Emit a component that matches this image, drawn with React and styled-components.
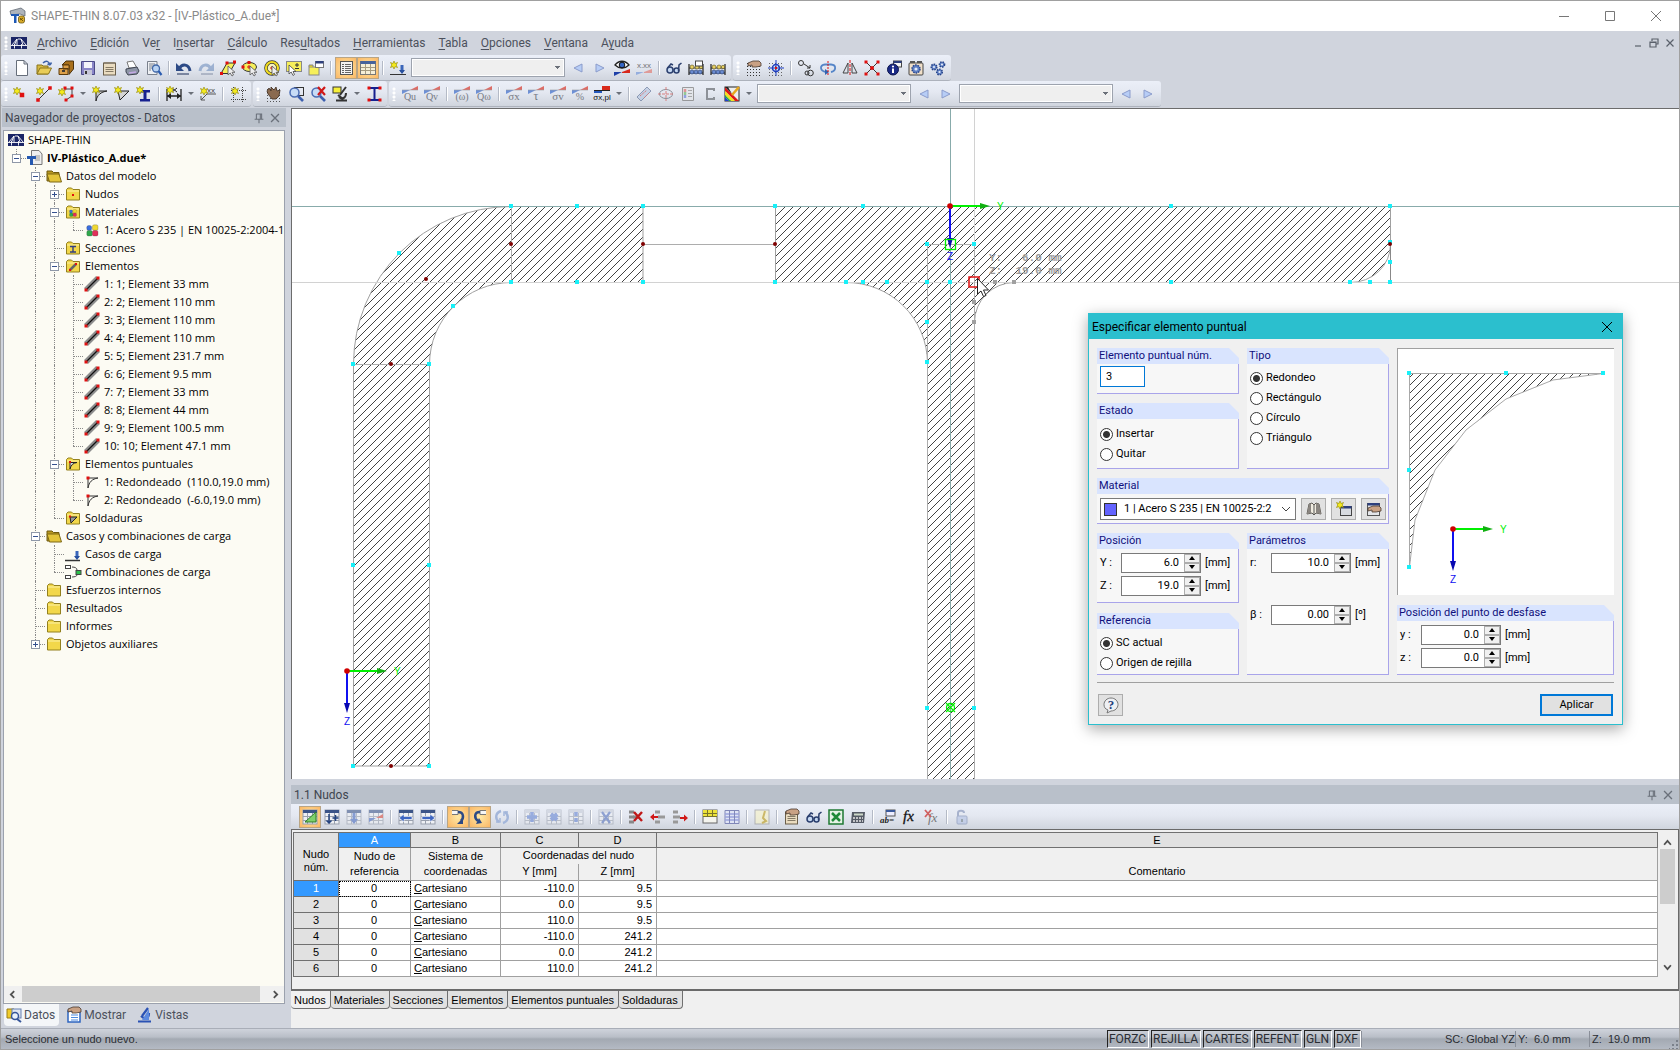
import React, { useState } from "react"
import styled, { createGlobalStyle, css } from "styled-components"

/* ---------- small drawing parts shared by the icons ---------- */

const Star = ({ x = 4, y = 4 }) => (
  <g transform={`translate(${x} ${y})`}>
    <path d="M0-4 1-1.5 3.5-2.5 2.2 0 3.5 2.5 1 1.6 0 4-1 1.6-3.5 2.5-2.2 0-3.5-2.5-1-1.5Z" fill="#f4ea1c" stroke="#8f8500" strokeWidth=".6" />
  </g>
)
const Dot = ({ x, y, s = 3, c = "#e01010" }) => (
  <rect x={x - s / 2} y={y - s / 2} width={s} height={s} fill={c} />
)
const Wedge = ({ faded }) => (
  <g opacity={faded ? 0.65 : 1}>
    <path d="M8 4 16 0V4Z" fill="#d82a1c" />
    <path d="M0 4H8L0 8Z" fill="#2f62c8" />
    <path d="M0 4H16" stroke="#777" strokeWidth=".6" />
  </g>
)
const Sub = ({ children, x = 8, s = 10 }) => (
  <text x={x} y="14" textAnchor="middle" fontFamily="Liberation Serif, serif" fontSize={s} fill="#777b84">{children}</text>
)
const Grid = ({ c = "#99a0ad", head = "#3b5488" }) => (
  <g>
    <rect x="1" y="1" width="14" height="14" fill="#eef0f4" stroke={c} />
    <rect x="1" y="1" width="14" height="3" fill={head} />
    <path d="M1 7.500H15M1 11.500H15M5.500 4V15M10.500 4V15" stroke={c} />
  </g>
)
const Folder = ({ children }) => (
  <g>
    <path d="M1.500 14V3.500L3 2H6.500L8 3.500H14.500V14Z" fill="#f2d74a" stroke="#93801e" />
    <path d="M2 5H14" stroke="#fcf2a8" />
    {children}
  </g>
)
const Dots = ({ c = "#333" }) => (
  <path d="M1 3.500H16M1 6.500H16M1 9.500H16M1 12.500H16M1 15.500H16" stroke={c} strokeDasharray="1 2" />
)
const Cursor = () => <path d="M8 6V15L10.200 13 12 16 13.500 15 12 12.300H15Z" fill="#eee" stroke="#555" strokeWidth=".8" />
const Lens = () => (
  <g>
    <circle cx="6.500" cy="6.500" r="4.500" fill="#c7dcf7" stroke="#4a6cb3" strokeWidth="1.500" />
    <path d="M10 10 15 15" stroke="#3c5fae" strokeWidth="2.600" />
  </g>
)
const Abacus = () => (
  <g>
    <path d="M1 15V4M15 15V4M1 8H15M1 13H15" stroke="#222" strokeWidth="1.200" fill="none" />
    <g fill="#e6cf62" stroke="#5b511c" strokeWidth=".6"><circle cx="4" cy="7" r="2" /><circle cx="9" cy="7" r="2" /><circle cx="13" cy="7" r="1.700" /></g>
    <g fill="#6a8bd0" stroke="#233a70" strokeWidth=".6"><circle cx="4" cy="12" r="2" /><circle cx="8" cy="12" r="2" /><circle cx="12" cy="12" r="2" /></g>
  </g>
)
const Gear = ({ x, y, r = 3 }) => (
  <g>
    <circle cx={x} cy={y} r={r} fill="#5e7fc4" stroke="#29468a" strokeWidth="1.500" strokeDasharray="1.500 1" />
    <circle cx={x} cy={y} r={r / 2.5} fill="#e4ebf8" />
  </g>
)
const Hand = ({ y = 0 }) => (
  <path d={`M2 ${y + 3} 7 ${y + 1}H13L15 ${y + 3}V${y + 6}L10 ${y + 7} 6 ${y + 7}V${y + 5}L2 ${y + 6}Z`} fill="#c9a184" stroke="#4a3a30" strokeWidth=".8" />
)
const Doc = () => (
  <g>
    <rect x="1.500" y="3" width="12" height="12" fill="#eadcc0" stroke="#6b5f4a" />
    <path d="M3.500 7.500H11.500M3.500 9.500H11.500M3.500 11.500H11.500" stroke="#857a66" />
    <path d="M2 2H13V4H2Z" fill="#8e8474" />
  </g>
)
const Fillet = () => <path d="M4 15V5H15C9 6 5 9 4 15Z" fill="#c9c9c9" stroke="#222" />
const Bead = () => (
  <g stroke="#333" strokeWidth=".3">
    <rect x="1" y="2" width="6" height="6" rx="2" fill="#3a6fe0" />
    <rect x="8" y="1" width="7" height="7" rx="2" fill="#f0d830" />
    <rect x="1" y="8" width="7" height="7" rx="2" fill="#2ea84a" />
    <rect x="8" y="8" width="7" height="7" rx="2" fill="#e0305a" />
  </g>
)
const IBeam = ({ c = "#16208f" }) => <path d="M4 4H14V6.500H10.500V13H14V15.500H4V13H7.500V6.500H4Z" fill={c} />

const icons = {
  logo: (
    <g>
      <rect y="2" width="16" height="12" fill="#1b2566" />
      <path d="M0 10.500H16M3.500 13.500V9M10.500 13.500V9M6 4 1 10M6 4V10M7 4H10M10 4 15 10M10 4 12 10M6 4 3.500 10" stroke="#fff" fill="none" strokeWidth=".9" />
    </g>
  ),
  app: (
    <g>
      <path d="M0 3 11 0 15 3V8L10 6 1 7Z" fill="#aeb4bc" stroke="#555d68" strokeWidth=".7" />
      <path d="M1 6H9V8H6.500V15H4V8H1Z" fill="#1e58b4" />
      <rect x="8.500" y="8" width="6" height="7" rx="2" fill="#d9ac2b" stroke="#6b5511" strokeWidth=".8" />
      <path d="M10 10 13 13M13 10 10 12" stroke="#5a4300" strokeWidth=".8" />
    </g>
  ),
  new: <path d="M2.500.500H10L13.500 4V15.500H2.500ZM10 .500V4H13.500" fill="#fff" stroke="#666e7a" />,
  open: (
    <g>
      <path d="M1 14V5H6L7 6H12V14Z" fill="#d5b843" stroke="#8a741b" />
      <path d="M1 14 4 8H15.500L12.500 14Z" fill="#e9cd58" stroke="#8a741b" />
      <path d="M7 3C10 0 13 1 14 5M14 5 11.500 4M14 5 15.500 2.500" stroke="#3e62a8" strokeWidth="1.500" fill="none" />
    </g>
  ),
  drawer: (
    <g>
      <path d="M4 5 8 1H15.500V9L11 14.500V5Z" fill="#a8701c" stroke="#4c320c" />
      <path d="M5 5H11V9H5ZM1 8.500H10V14.500H1Z" fill="#dca04a" stroke="#5c3c0e" />
      <path d="M4 11H7" stroke="#333" strokeWidth="1.800" />
    </g>
  ),
  save: (
    <g>
      <path d="M1.500 1.500H14.500V14.500H1.500Z" fill="#8a86c8" stroke="#4b4a86" />
      <rect x="4" y="2" width="8" height="6" fill="#f3f3fa" />
      <rect x="4" y="10" width="8" height="5" fill="#c6c6d8" />
      <rect x="5" y="11" width="2" height="3" fill="#333" />
    </g>
  ),
  sheet: <Doc />,
  print: (
    <g>
      <path d="M3 2 9 1 13 8H5Z" fill="#fff" stroke="#777" />
      <path d="M2 9 13 7 15 11 13 14 4 15 2 12Z" fill="#8d95a6" stroke="#3d4350" />
      <path d="M5 13 12 12" stroke="#c3a8e4" strokeWidth="1.500" />
    </g>
  ),
  preview: (
    <g>
      <path d="M1.500 1.500H11V14.500H1.500ZM3 4H9M3 6H9M3 8H6M3 10H5" fill="#eef0f3" stroke="#7a818d" />
      <circle cx="10" cy="8.500" r="3.500" fill="#b8d3f4" stroke="#3f67a8" strokeWidth="1.300" />
      <path d="M12.500 11 15.500 15" stroke="#2b5cb0" strokeWidth="2.200" />
    </g>
  ),
  undo: (
    <g>
      <path d="M3 9C6 3 13 4 14 11" fill="none" stroke="#2c4a86" strokeWidth="3" />
      <path d="M0 3V11H8Z" fill="#2c4a86" />
      <path d="M1 14H13" stroke="#1c2f58" />
    </g>
  ),
  redo: (
    <g opacity=".45">
      <path d="M13 9C10 3 3 4 2 11" fill="none" stroke="#4a72ad" strokeWidth="3" />
      <path d="M16 3V11H8Z" fill="#4a72ad" />
      <path d="M3 14H15" stroke="#1c2f58" />
    </g>
  ),
  selPoly: (
    <g>
      <path d="M7 3H15L9 13.500H1Z" fill="#f6ef5a" stroke="#333" />
      <Dot x={7} y={3} /><Dot x={14.500} y={2} /><Dot x={1.500} y={13.500} /><Cursor />
    </g>
  ),
  selEllipse: (
    <g>
      <ellipse cx="7.500" cy="7" rx="7" ry="4.500" fill="#f6ef5a" stroke="#333" />
      <Dot x={7} y={2.500} /><Dot x={1} y={7} /><path d="M5 7H9M7 5V9" stroke="#e01010" /><Cursor />
    </g>
  ),
  selRing: (
    <g>
      <circle cx="8" cy="8" r="6" fill="#f7f3c0" stroke="#333" strokeWidth="3.500" />
      <circle cx="8" cy="8" r="6" fill="none" stroke="#f0dc20" strokeWidth="2.200" />
      <path d="M6 8H10M8 6V10" stroke="#e01010" /><Cursor />
    </g>
  ),
  selRect: (
    <g>
      <rect x=".500" y="1.500" width="15" height="10" fill="#f6ef5a" stroke="#888" />
      <path d="M9 5H13M11 3V7M9 8.500H13" stroke="#333" />
      <path d="M3 5V14L5.200 12 7 15.500 8.500 14.500 7 11.500H10Z" fill="#fff" stroke="#444" strokeWidth=".8" />
    </g>
  ),
  windows: (
    <g>
      <rect x="1" y="7" width="10" height="8" fill="#f6ef5a" stroke="#888" />
      <path d="M1 7V5H5V7" fill="#d8c92a" stroke="#888" />
      <rect x="7.500" y="1.500" width="8" height="6" fill="#fff" stroke="#777" />
      <rect x="7.500" y="1" width="8" height="2.500" fill="#2d3f7d" />
    </g>
  ),
  list: (
    <g>
      <rect x="2.500" y="1.500" width="12" height="13" fill="#f4f4f4" stroke="#555" />
      <path d="M7 4.500H13M7 6.500H13M7 8.500H13M7 10.500H13M7 12.500H13" stroke="#666" />
      <path d="M5 4V13" stroke="#333" strokeDasharray="1 1" strokeWidth="1.500" />
    </g>
  ),
  table: (
    <g>
      <rect x=".500" y="1.500" width="15" height="13" fill="#f6efd8" stroke="#777" />
      <rect x=".500" y="1" width="15" height="3" fill="#47639c" />
      <path d="M1 7.500H15M1 10.500H15M5.500 4V14M10.500 4V14" stroke="#a69b80" />
    </g>
  ),
  load: (
    <g>
      <Star x={4} y={5} />
      <path d="M0 14.500H16" stroke="#333" />
      <path d="M12 5V12" stroke="#3a66ba" strokeWidth="3" /><path d="M9 10H15L12 14Z" fill="#274f9e" />
    </g>
  ),
  left: <path d="M12 4V12L4 8Z" fill="#b7cdf6" stroke="#8b9ccb" />,
  right: <path d="M4 4V12L12 8Z" fill="#b7cdf6" stroke="#8b9ccb" />,
  eye: (
    <g>
      <path d="M1 5C5 0 11 0 15 5 11 9 5 9 1 5Z" fill="#fff" stroke="#222" strokeWidth="1.300" />
      <circle cx="8" cy="5" r="2.800" fill="#3565c4" stroke="#111" />
      <path d="M8 12 16 9V13H8Z" fill="#d8281c" /><path d="M0 12H8L0 16Z" fill="#1e40a8" />
    </g>
  ),
  xxx: (
    <g opacity=".8">
      <text x="8" y="8" textAnchor="middle" fontFamily="Liberation Sans, sans-serif" fontSize="8" fill="#555">x.xx</text>
      <path d="M8 12 16 9V13H8Z" fill="#e08a84" /><path d="M0 12H8L0 15Z" fill="#84a2dc" />
    </g>
  ),
  glasses: (
    <g fill="#c5d8f2" stroke="#2b3f6e" strokeWidth="1.500">
      <circle cx="4" cy="10" r="3" /><circle cx="10.500" cy="10.500" r="2.500" /><path d="M1.500 8 5 4 7 5M12.500 11 13 5 15.500 3" fill="none" />
    </g>
  ),
  abacusWin: <g><Abacus /><rect x="7.500" y="1" width="7" height="5" fill="#fff" stroke="#444" /></g>,
  abacus: <Abacus />,
  handGrid: <g><Dots /><Hand /></g>,
  targetGrid: (
    <g>
      <Dots c="#666" /><circle cx="8" cy="8" r="3.500" fill="none" stroke="#1e3fc0" strokeWidth="1.500" />
      <path d="M8 0V16M0 8H16" stroke="#1e3fc0" /><Dot x={8} y={8} s={2} />
    </g>
  ),
  copy: (
    <g fill="none" stroke="#333">
      <circle cx="3" cy="3" r="2.500" /><circle cx="12.500" cy="13" r="2.800" /><circle cx="9" cy="13" r="2" /><path d="M6 4 12 8M12 8V5M12 8H9" />
    </g>
  ),
  rotate: (
    <g>
      <path d="M6 12C0 11-1 5 5 4.500H11C17 5 16 11 11 12" fill="none" stroke="#5585c8" strokeWidth="1.800" />
      <path d="M5 9V15L9 12Z" fill="#3264b0" /><path d="M8 1V15" stroke="#e01010" strokeDasharray="2 1" />
    </g>
  ),
  mirror: (
    <g fill="none" stroke="#444"><path d="M6 3V13H1ZM10 3V13H15Z" /><path d="M8 0V16" stroke="#e01010" strokeDasharray="3 1" /></g>
  ),
  scale: (
    <g>
      <path d="M2 2 14 14M14 2 2 14" stroke="#333" />
      <Dot x={2} y={2} /><Dot x={14} y={2} /><Dot x={2} y={14} /><Dot x={14} y={14} /><circle cx="8" cy="8" r="2" fill="#e01010" />
    </g>
  ),
  info: (
    <g>
      <rect x="7.500" y="1" width="8" height="6" fill="#f5f5f5" stroke="#444" /><rect x="7.500" y="1" width="8" height="2" fill="#2d3f7d" />
      <circle cx="7" cy="9.500" r="5.500" fill="#1b2a86" stroke="#0e174e" /><path d="M7 8.500V13" stroke="#fff" strokeWidth="2" /><circle cx="7" cy="6.500" r="1.100" fill="#fff" />
    </g>
  ),
  gearDoc: <g><rect x="1" y="3" width="14" height="12" rx="1" fill="#f0dfc8" stroke="#444" /><path d="M2 2H7M9 2H14" stroke="#555" strokeWidth="2" /><Gear x={8} y={9} r={4} /></g>,
  gears: <g><Gear x={4} y={7} r={2.800} /><Gear x={12} y={4.500} r={2.600} /><Gear x={9.500} y={12} r={2.800} /></g>,

  point: <g><Star x={3} y={5} /><Dot x={8} y={9} s={4.500} /></g>,
  line: <g><Star x={4} y={5} /><path d="M2 14 14 2" stroke="#333" /><Dot x={2} y={14} s={3.500} /><Dot x={14} y={2} s={3.500} /></g>,
  poly: <g><path d="M6 3H14V10L8 14" fill="none" stroke="#444" /><Star x={4} y={6} /><Dot x={14} y={2} /><Dot x={14} y={10} /><Dot x={8} y={14} /><Dot x={7} y={2} /></g>,
  fillet: <g><Fillet /><Star x={4} y={4} /></g>,
  gusset: <g><path d="M4 5H15L6 14Z" fill="#d4d4d4" stroke="#222" /><Star x={4} y={4} /></g>,
  ibeam: <g><IBeam /><Star x={4} y={4} /></g>,
  dim: <g><path d="M1 3V15M15 3V15M1 10H15" stroke="#222" strokeWidth="1.300" /><path d="M1 10 5 7V13ZM15 10 11 7V13Z" fill="#222" /><path d="M6 2 11 6M11 2 6 6" stroke="#222" /><Star x={4} y={4} /></g>,
  dimxx: <g><text x="7" y="7" fontFamily="Liberation Sans, sans-serif" fontSize="8" fill="#444">xx</text><path d="M16 8H7L1 14M1 14V10M1 14H5" stroke="#555" fill="none" /><Star x={4} y={5} /></g>,
  gridNew: <g><path d="M3.500 1V16M12.500 1V16M1 4.500H16M1 13.500H16" stroke="#444" strokeDasharray="1 1" /><Star x={5} y={5} /></g>,
  pan: <g><Dots c="#555" /><path d="M1 5 3 2 5 5 5 1 8 4 10 1 11 5 14 4 13 10 10 13H6L2 8Z" fill="#8a6a50" stroke="#3c2c20" strokeWidth=".8" /></g>,
  zoomWin: <g><rect x="6.500" y="1.500" width="9" height="8" fill="none" stroke="#333" /><Lens /></g>,
  zoomOff: <g><Lens /><path d="M8 1 15 9M15 1 8 9" stroke="#d01818" strokeWidth="2.200" /></g>,
  microscope: (
    <g><path d="M14 1 8 9M4 14.500H15M7 11C10 14 14 12 14 7M6 9 11 13" stroke="#333" strokeWidth="2" fill="none" /><rect x="1" y="1" width="8" height="6" fill="#f6ef3a" stroke="#333" /></g>
  ),
  section: <g><path d="M3 2H14M3 14H14M8.500 2V14" stroke="#16208f" strokeWidth="2" /><Dot x={3} y={2} /><Dot x={14} y={2} /><Dot x={3} y={14} /><Dot x={14} y={14} /></g>,
  qu: <g><Wedge faded /><Sub>Qu</Sub></g>,
  qv: <g><Wedge faded /><Sub>Qv</Sub></g>,
  w: <g><Wedge faded /><Sub>(ω)</Sub></g>,
  qw: <g><Wedge faded /><Sub>Qω</Sub></g>,
  sx: <g><Wedge faded /><Sub s={11}>σx</Sub></g>,
  tau: <g><Wedge faded /><Sub s={12}>τ</Sub></g>,
  sv: <g><Wedge faded /><Sub s={11}>σv</Sub></g>,
  pct: <g><Wedge faded /><Sub>%</Sub></g>,
  sxpl: (
    <g><path d="M0 4H8V7H0Z" fill="#2458bc" /><path d="M8 0H16V4H8Z" fill="#d82a1c" /><path d="M0 4.500H16" stroke="#222" />
      <text x="8" y="14" textAnchor="middle" fontFamily="Liberation Sans, sans-serif" fontSize="8" fill="#111">σx,pl</text></g>
  ),
  ruler: <g opacity=".7"><path d="M1 11 11 1 15 5 5 15Z" fill="#b9c9e2" stroke="#687a9c" /><path d="M4 10 11 4M8 12 13 7" stroke="#d05050" strokeDasharray="2 1" /></g>,
  ellipse: <g fill="none" stroke="#8a8f98"><ellipse cx="8" cy="8" rx="6.500" ry="4.500" /><path d="M8 1V15M0 8H16" stroke="#d88080" strokeDasharray="3 1" /></g>,
  legend: <g opacity=".8"><path d="M2.500 1.500H13.500V14.500H2.500Z" fill="#e4e6ea" stroke="#888" /><path d="M5 3V6" stroke="#e08080" strokeWidth="2.500" /><path d="M5 6V9" stroke="#80c080" strokeWidth="2.500" /><path d="M5 9V12" stroke="#8090e0" strokeWidth="2.500" /><path d="M8 4.500H12M8 7.500H12M8 10.500H12" stroke="#999" /></g>,
  channel: <path d="M12 5V3H5V13H12V11" fill="none" stroke="#8d9198" strokeWidth="2" />,
  colors: (
    <g><rect x="1" y="1" width="14" height="14" fill="#eee" stroke="#222" /><path d="M1 1 15 15H11L1 5Z" fill="#e01818" /><path d="M1 5 11 15H7L1 9Z" fill="#f4e020" /><path d="M1 9 7 15H5L1 11Z" fill="#22b43a" /><path d="M1 11 5 15H1Z" fill="#2040d0" /><path d="M1 1H4L8 8Z" fill="#222" /><path d="M15 1 8 9" stroke="#e6a71e" strokeWidth="2.500" /></g>
  ),

  tblEdit: <g><Grid /><path d="M3 13 14 3V13Z" fill="#7ed06c" stroke="#2f7d24" /></g>,
  tblSplit: <g><Grid /><path d="M5 5V14M2.500 11.500 5 14 7.500 11.500M11.500 6V12M8.500 9H14.500" stroke="#22417f" strokeWidth="1.500" fill="none" /></g>,
  tblDown: <g opacity=".6"><Grid /><path d="M8 4V12" stroke="#4a6cc0" strokeWidth="3" /><path d="M4 10H12L8 15Z" fill="#4a6cc0" /></g>,
  tblWedge: <g opacity=".6"><Grid /><path d="M8 9 15 5V9Z" fill="#d84a3c" /><path d="M1 9H8L1 13Z" fill="#4a6cc0" /></g>,
  tblLeft: <g><Grid /><path d="M1 9 6 5V7.500H14V10.500H6V13Z" fill="#3e66c2" stroke="#fff" strokeWidth=".6" /></g>,
  tblRight: <g><Grid /><path d="M15 9 10 5V7.500H2V10.500H10V13Z" fill="#3e66c2" stroke="#fff" strokeWidth=".6" /></g>,
  turnDown: <g><path d="M2 1.500H8V5.500H2" fill="#f6f6f6" stroke="#777" /><path d="M8 3C14 3 14 9 11 12" fill="none" stroke="#2c4a86" strokeWidth="2.500" /><path d="M13 9V15H7Z" fill="#2c4a86" /></g>,
  turnUp: <g><path d="M14 1.500H8V5.500H14" fill="#f6f6f6" stroke="#777" /><path d="M8 3C2 3 2 9 6 12" fill="none" stroke="#2c4a86" strokeWidth="2.500" /><path d="M4 15 10 14 7 9Z" fill="#2c4a86" /></g>,
  sync: <g fill="none" stroke="#a3b6da" strokeWidth="2.400"><path d="M7 2C1 4 1 10 5 13M9 14C15 12 15 6 11 3" /><path d="M2 13H6V9M14 3H10V7" strokeWidth="1.500" /></g>,
  plus: <g opacity=".55"><Grid head="#c4cad6" /><path d="M8 3V13M3 8H13" stroke="#5a7cd0" strokeWidth="3.500" /></g>,
  times: <g opacity=".55"><Grid head="#c4cad6" /><path d="M5 5 11 11M11 5 5 11" stroke="#5a7cd0" strokeWidth="4" /></g>,
  colon: <g opacity=".55"><Grid head="#c4cad6" /><path d="M8 3V7M8 9V13" stroke="#5a7cd0" strokeWidth="3.500" /></g>,
  clearX: <g opacity=".55"><Grid head="#c4cad6" /><path d="M4 3 12 14M12 3 4 14" stroke="#4a68b8" strokeWidth="2.200" /></g>,
  rowDel: <g><path d="M1 3H6M1 8H6M1 13H6" stroke="#888" strokeWidth="3" /><path d="M5 8H11" stroke="#888" strokeWidth="3" /><path d="M6 3 14 12M14 3 6 12" stroke="#c01818" strokeWidth="2.400" /></g>,
  rowIn: <g><path d="M5 3H10M8 8H15M5 13H10" stroke="#999" strokeWidth="3" /><path d="M0 8 4 4.500V7H8V9H4V11.500Z" fill="#d01818" /></g>,
  rowOut: <g><path d="M1 3H6M1 8H8M1 13H6" stroke="#999" strokeWidth="3" /><path d="M16 9 12 5.500V8H8V10H12V12.500Z" fill="#d01818" /></g>,
  gridYellow: <g><rect x="1" y="1" width="14" height="13" fill="#f4f4ee" stroke="#666" /><rect x="1" y="1" width="14" height="6" fill="#ece23a" /><path d="M1 4.500H15M1 7.500H15M5.500 1V8M10.500 1V8" stroke="#77742a" /></g>,
  gridBlue: <g><path d="M1 1.500H15V14.500H1Z" fill="#dfe4f4" stroke="#8087b8" /><path d="M1 5H15M1 8H15M1 11H15" stroke="#9aa2dc" strokeWidth="1.600" /><path d="M5.500 2V14M10.500 2V14" stroke="#8087b8" /></g>,
  chart: <g opacity=".65"><rect x="1" y="1" width="14" height="14" fill="#f6f2c8" stroke="#999" /><path d="M11 2 9 9 12 12 8 14" stroke="#c0a020" strokeWidth="2" fill="none" /></g>,
  handDoc: <g><Doc /><Hand y={-1} /></g>,
  excel: <g><path d="M1 1H15V15H1Z" fill="#e6f2e6" stroke="#1f7a33" strokeWidth="1.500" /><path d="M4 4 12 12M12 4 4 12" stroke="#1f8a38" strokeWidth="2.500" /></g>,
  calc: <g><path d="M2 3H15L14 14H1Z" fill="#555b66" /><path d="M4 4.500H13V6.500H4Z" fill="#cdd8c8" /><path d="M3 9H13M3 12H13" stroke="#e6e6e6" strokeWidth="1.500" strokeDasharray="2 1" /></g>,
  ab: <g><rect x="6" y="1" width="9" height="6" fill="#eef" stroke="#555" /><rect x="6" y="1" width="9" height="2" fill="#3b5a9c" /><text x="0" y="14" fontFamily="Liberation Serif, serif" fontSize="9" fontStyle="italic" fontWeight="bold" fill="#222">ab=</text></g>,
  fx: <text x="1" y="12" fontFamily="Liberation Serif, serif" fontSize="15" fontStyle="italic" fill="#111" stroke="#111" strokeWidth=".3">fx</text>,
  fxOff: <g><text x="4" y="13" fontFamily="Liberation Serif, serif" fontSize="13" fontStyle="italic" fill="#777">fx</text><path d="M1 1 7 8M7 1 1 8" stroke="#d06060" strokeWidth="1.800" /></g>,
  lock: <g opacity=".6"><path d="M4 8V4C4 1 10 1 10 4" fill="none" stroke="#7d8db4" strokeWidth="2" /><rect x="3" y="7" width="10" height="8" rx="1" fill="#b4c3e6" stroke="#7d8db4" /><path d="M8 10V13" stroke="#566" strokeWidth="1.500" /></g>,

  doc: <g><path d="M4.500.500H12L15 4V14.500H4.500Z" fill="#eee" stroke="#777" /><path d="M8 6H13M8 8H13M8 10H13" stroke="#999" /><path d="M0 6H9V9H6V15H3V9H0Z" fill="#2458b0" /></g>,
  folderOpen: <g><path d="M1 13V3H6L7.500 4.500H13V13Z" fill="#b9971f" stroke="#6f5b10" /><path d="M3.500 14 1 6H13L15.500 14Z" fill="#e3c43a" stroke="#7d6814" /></g>,
  folder: <Folder />,
  fNodes: <Folder><Dot x={8} y={9} s={2} /></Folder>,
  fMat: <Folder><g transform="translate(4 5) scale(.5)"><Bead /></g></Folder>,
  fSec: <Folder><path d="M5 6.500H11M5 12H11M8 6.500V12" stroke="#333f80" strokeWidth="1.400" /></Folder>,
  fElem: <Folder><path d="M5 12 11 6" stroke="#666" strokeWidth="2.500" /><Dot x={5} y={12} s={2} /><Dot x={11} y={6} s={2} /></Folder>,
  fPoint: <Folder><path d="M5 13V6.500H12C8 7 6 9 5 13" fill="#ddd" stroke="#222" /><Dot x={5} y={6} s={2} /></Folder>,
  fWeld: <Folder><path d="M5 7H12L6 13Z" fill="#999" stroke="#222" /><Dot x={5} y={6.500} s={2} /></Folder>,
  beads: <g transform="translate(2 2) scale(.8)"><Bead /></g>,
  elem: <g><path d="M2 14 14 2" stroke="#8d8d8d" strokeWidth="5.500" /><path d="M2 14 14 2" stroke="#111" strokeWidth="1.300" /><Dot x={2} y={14} /><Dot x={14} y={2} /></g>,
  round: <g><path d="M4 14V4H14C8 5 5 8 4 14" fill="none" stroke="#333" /><Dot x={4} y={4} /></g>,
  loadCase: <g><path d="M0 14.500H15" stroke="#333" strokeWidth="1.500" /><path d="M12 5V12" stroke="#3a66ba" strokeWidth="3" /><path d="M9 10H15L12 14Z" fill="#274f9e" /></g>,
  combo: <g fill="none" stroke="#444"><rect x=".500" y="1.500" width="5" height="3" fill="#fff" /><rect x=".500" y="11.500" width="5" height="3" fill="#fff" /><path d="M7 3C10 3 12 4 12 6M7 13C10 13 12 12 12 11" /><rect x="11" y="6.500" width="5" height="4" fill="#2cc04a" /></g>,
  navData: <g><path d="M1 2H8V11H1Z" fill="#f0cc2c" stroke="#9a7f14" /><rect x="6" y="2" width="9" height="9" fill="#dfe6f2" stroke="#6680b0" /><circle cx="9" cy="9" r="3.500" fill="#e9f2fc" stroke="#36569a" strokeWidth="1.500" /><path d="M11 12 15 15" stroke="#36569a" strokeWidth="2" /></g>,
  navShow: <g><rect x="2" y="4" width="12" height="11" fill="#fff" stroke="#2c64c0" strokeWidth="1.500" /><path d="M5 8H12M5 10.500H12M5 13H12" stroke="#4c8ae0" /><Hand y={-1} /></g>,
  navView: <g><path d="M11 1 5 9M1 14.500H14M4 9C8 13 12 12 12 6" fill="none" stroke="#2a52b4" strokeWidth="2.200" /><path d="M12 2V13H5Z" fill="#5c8ae0" /></g>,
  book: <g><path d="M1 13 3 3 6 2 8 4 10 2 13 3 15 13 10 12 8 14 6 12Z" fill="#f0ece0" stroke="#5d5a55" /><path d="M8 4V14" stroke="#555" /><path d="M1 13 3 3 5 2.500 5 12ZM10 2 13 3 15 13 10 12Z" fill="#8a8580" /></g>,
  winNew: <g><rect x="4.500" y="5.500" width="11" height="9" fill="#d8dbe0" stroke="#444" /><rect x="4.500" y="5" width="11" height="2.500" fill="#2d3f7d" /><Star x={4} y={4} /></g>,
  winHand: <g><rect x="1.500" y="2.500" width="12" height="12" fill="#e4e6ea" stroke="#555" /><rect x="1.500" y="2" width="12" height="2.500" fill="#2d3f7d" /><Hand y={4} /></g>,
  help: <g><path d="M8 1C12 1 15 4 15 7.500S12 14 8 14L4 16 5 13C2 12 1 10 1 7.500 1 4 4 1 8 1Z" fill="#eef0f4" stroke="#777" /><text x="8" y="12" textAnchor="middle" fontFamily="Liberation Serif, serif" fontWeight="bold" fontSize="13" fill="#24407c">?</text></g>,
  pin: <path d="M5 3V9.500H11V3.500H5M9.500 3.500V9.500M3 9.500H13M8 10V14" fill="none" stroke="#6a707a" strokeWidth="1.200" />,
  close: <path d="M3.500 3.500 12.500 12.500M12.500 3.500 3.500 12.500" stroke="#6a707a" strokeWidth="1.500" />,
}

const Glyph = styled.svg.attrs({ viewBox: "0 0 16 16", "aria-hidden": true })`
  width: ${(p) => p.$size || 16}px;
  height: ${(p) => p.$size || 16}px;
  flex: none;
  display: block;
  overflow: visible;
`
const Icon = ({ name, size }) => <Glyph $size={size}>{icons[name]}</Glyph>

/* ---------- data ---------- */

const menus = [
  ["", "A", "rchivo"], ["", "E", "dición"], ["Ve", "r", ""], ["I", "n", "sertar"], ["", "C", "álculo"],
  ["Res", "u", "ltados"], ["", "H", "erramientas"], ["", "T", "abla"], ["", "O", "pciones"], ["", "V", "entana"], ["A", "y", "uda"],
]

// "|" separator, "v" drop-down arrow, "[]" combo box, "*" prefix for a pressed button
const barFile = "new open drawer save sheet print preview | undo redo selPoly selEllipse selRing selRect windows | *list *table | load [] left right eye xxx | glasses abacusWin abacus"
const barEdit = "handGrid targetGrid | copy rotate mirror scale info gearDoc gears"
const barInsert = "point line poly v fillet gusset ibeam | dim v dimxx | gridNew"
const barZoom = "pan zoomWin zoomOff microscope v section"
const barResults = "qu qv | w qw | sx tau sv pct sxpl v | ruler ellipse legend channel colors v [] left right [] left right"
const barTable = "*tblEdit tblSplit tblDown tblWedge | tblLeft tblRight | *turnDown *turnUp sync | plus times colon | clearX | rowDel rowIn rowOut | gridYellow gridBlue | chart | handDoc glasses excel calc | ab fx fxOff | lock"

// guides: "I" line through, "T" branch, "L" last branch, " " nothing
// toggles: "e" and "-" open, "+" closed, "p" closed and last of its level
const tree = [
  ["", "logo", "SHAPE-THIN"],
  ["e", "doc", "IV-Plástico_A.due*", true],
  [" -", "folderOpen", "Datos del modelo"],
  [" I+", "fNodes", "Nudos"],
  [" I-", "fMat", "Materiales"],
  [" IIL", "beads", "1: Acero S 235 | EN 10025-2:2004-1"],
  [" IT", "fSec", "Secciones"],
  [" I-", "fElem", "Elementos"],
  [" IIT", "elem", "1: 1; Element 33 mm"],
  [" IIT", "elem", "2: 2; Element 110 mm"],
  [" IIT", "elem", "3: 3; Element 110 mm"],
  [" IIT", "elem", "4: 4; Element 110 mm"],
  [" IIT", "elem", "5: 5; Element 231.7 mm"],
  [" IIT", "elem", "6: 6; Element 9.5 mm"],
  [" IIT", "elem", "7: 7; Element 33 mm"],
  [" IIT", "elem", "8: 8; Element 44 mm"],
  [" IIT", "elem", "9: 9; Element 100.5 mm"],
  [" IIL", "elem", "10: 10; Element 47.1 mm"],
  [" I-", "fPoint", "Elementos puntuales"],
  [" IIT", "round", "1: Redondeado  (110.0,19.0 mm)"],
  [" IIL", "round", "2: Redondeado  (-6.0,19.0 mm)"],
  [" IL", "fWeld", "Soldaduras"],
  [" -", "folderOpen", "Casos y combinaciones de carga"],
  [" IT", "loadCase", "Casos de carga"],
  [" IL", "combo", "Combinaciones de carga"],
  [" T", "folder", "Esfuerzos internos"],
  [" T", "folder", "Resultados"],
  [" T", "folder", "Informes"],
  [" p", "folder", "Objetos auxiliares"],
]

const nodes = [
  ["-110.0", "9.5"], ["0.0", "9.5"], ["110.0", "9.5"], ["-110.0", "241.2"], ["0.0", "241.2"], ["110.0", "241.2"],
]

const sheets = ["Nudos", "Materiales", "Secciones", "Elementos", "Elementos puntuales", "Soldaduras"]
const modes = ["FORZC", "REJILLA", "CARTES", "REFENT", "GLN", "DXF"]

const cyanPoints = [
  [511, 206], [577, 206], [643, 206], [775, 206], [863, 206], [1171, 206], [1390, 206], [399, 253], [453, 306],
  [511, 282], [577, 282], [643, 282], [775, 282], [846, 282], [863, 282], [887, 282], [927, 282], [950, 282],
  [1171, 282], [1350, 282], [1370, 282], [1390, 282], [1390, 262], [1390, 242], [927, 244], [974, 244],
  [927, 322], [927, 362], [353, 364], [429, 364], [353, 565], [429, 565], [353, 766], [429, 766], [927, 708], [974, 708],
]
const redPoints = [[511, 244], [643, 244], [775, 244], [1390, 244], [426, 279], [391, 364], [391, 766]]
const greyPoints = [[995, 282], [1014, 282], [974, 302], [974, 322]]

/* ---------- tool bars ---------- */

function Tools({ items }) {
  return items.split(" ").map((item, i) => {
    if (item === "|") return <Separator key={i} />
    if (item === "v") return <DropArrow key={i} aria-label="Más opciones" />
    if (item === "[]") return <Combo key={i} aria-label="Selección" />
    const pressed = item[0] === "*"
    const name = pressed ? item.slice(1) : item
    return (
      <ToolButton key={i} $pressed={pressed} aria-label={name}>
        <Icon name={name} />
      </ToolButton>
    )
  })
}

function ToolStrip({ items }) {
  return (
    <Strip>
      <Grip />
      <Tools items={items} />
    </Strip>
  )
}

/* ---------- tree ---------- */

function TreeRow({ guides, icon, label, bold }) {
  return (
    <Row>
      {guides.split("").map((g, i) => {
        const toggle = "e-+p".includes(g)
        return (
          <Guide key={i} $kind={g}>
            {toggle && <Toggle aria-label="Desplegar">{g === "+" || g === "p" ? <Plus /> : <Minus />}</Toggle>}
          </Guide>
        )
      })}
      <RowIcon>
        <Icon name={icon} />
      </RowIcon>
      <RowLabel $bold={bold}>{label}</RowLabel>
    </Row>
  )
}
const Minus = () => <MiniSvg viewBox="0 0 7 7"><path d="M1 3.500H6" stroke="#35518f" /></MiniSvg>
const Plus = () => <MiniSvg viewBox="0 0 7 7"><path d="M1 3.500H6M3.500 1V6" stroke="#35518f" /></MiniSvg>

/* ---------- drawing area ---------- */

const Axes = ({ x, y, gap = 50 }) => (
  <g>
    <path d={`M${x} ${y}h30`} stroke="#00f000" strokeWidth="2" />
    <path d={`M${x + 30} ${y - 3}l10 3-10 3z`} fill="#10b010" />
    <path d={`M${x} ${y}v32`} stroke="#1010f0" strokeWidth="2" />
    <path d={`M${x - 3} ${y + 32}l3 10 3-10z`} fill="#0808b0" />
    <circle cx={x} cy={y} r="2.800" fill="#d00000" />
    <AxisText x={x + gap - 3} y={y + 4} fill="#00f000">Y</AxisText>
    <AxisText x={x - 3} y={y + 54} fill="#1010f0">Z</AxisText>
  </g>
)

const Hatch = ({ id }) => (
  <pattern id={id} width="8" height="8" patternUnits="userSpaceOnUse">
    <path d="M-1 9 9-1M-1 1 1-1M7 9 9 7" stroke="#2c2c2c" strokeWidth=".9" />
  </pattern>
)

function Drawing() {
  return (
    <DrawingSvg role="img" aria-label="Sección">
      <defs><Hatch id="hatch" /></defs>
      <g transform="translate(-292 -109)">
        <g fill="url(#hatch)" stroke="#a0a0a0">
          <path d="M353.500 766V364A158 158 0 0 1 511 206.500H643V282.500H511A82 82 0 0 0 429.500 364V766Z" />
          <path d="M775.500 206.500H1390.500V244A40 38 0 0 1 1350 282.500H1014A40 40 0 0 0 974.500 322V790H927.500V363A81 81 0 0 0 846 282.500H775.500Z" />
        </g>
        <g stroke="#c4c4c4" fill="none">
          <path d="M291 282.500H1690M974.500 100V790" stroke="#d2d2d2" />
          <path d="M511.500 206V282M353 364.500H429M643 244.500H775M927.500 790V244.500H974.500V790" stroke="#adadad" />
          <path d="M1390.500 244V282" stroke="#888" />
        </g>
        <path d="M291 206.500H1690M950.500 100V790" stroke="#88abab" fill="none" />
        {cyanPoints.map(([x, y]) => <Dot key={`${x}-${y}`} x={x} y={y} s={4} c="#18f0f8" />)}
        {greyPoints.map(([x, y]) => <Dot key={`${x}-${y}`} x={x} y={y} s={4} c="#a0a0a0" />)}
        {redPoints.map(([x, y]) => <circle key={`${x}-${y}`} cx={x} cy={y} r="2" fill="#800000" />)}
        <Axes x={950} y={206} />
        <Axes x={347} y={671} />
        <g fill="none" stroke="#00f000" strokeWidth="1.300">
          <rect x="945.500" y="239.500" width="10" height="10" />
          <circle cx="950.500" cy="707.500" r="4" />
          <path d="M946 703 955 712M955 703 946 712" />
        </g>
        <rect x="969" y="277" width="10" height="10" fill="none" stroke="#e01010" strokeWidth="1.500" />
        <CoordText x="989" y="261">{"Y:   6.0 mm"}</CoordText>
        <CoordText x="989" y="274">{"Z:  19.0 mm"}</CoordText>
        <path d="M977.500 278.500V294L981 291 983.500 296.500 986 295.500 983.500 290H988.500Z" fill="#fff" stroke="#222" />
      </g>
    </DrawingSvg>
  )
}

/* ---------- dialog ---------- */

function Radios({ name, options, value }) {
  const [picked, setPicked] = useState(value)
  return options.map((option) => (
    <RadioLabel key={option}>
      <Radio name={name} checked={picked === option} onChange={() => setPicked(option)} />
      {option}
    </RadioLabel>
  ))
}

function NumberField({ id, label, value, unit }) {
  return (
    <Field>
      <label htmlFor={id}>{label}</label>
      <Spinner>
        <SpinInput id={id} defaultValue={value} />
        <SpinButtons>
          <SpinButton aria-label="Más"><Tri viewBox="0 0 6 4"><path d="M0 4H6L3 0Z" /></Tri></SpinButton>
          <SpinButton aria-label="Menos"><Tri viewBox="0 0 6 4"><path d="M0 0H6L3 4Z" /></Tri></SpinButton>
        </SpinButtons>
      </Spinner>
      <span>{unit}</span>
    </Field>
  )
}

function PointDialog() {
  const corners = [[11, 24], [108, 24], [205, 24], [11, 121], [11, 218]]
  return (
    <Dialog role="dialog" aria-label="Especificar elemento puntual">
      <DialogTitle>
        Especificar elemento puntual
        <PlainButton aria-label="Cerrar">
          <Cross viewBox="0 0 12 12"><path d="M1 1 11 11M11 1 1 11" /></Cross>
        </PlainButton>
      </DialogTitle>
      <DialogBody>
        <DialogColumns>
          <FormArea>
            <Pair>
              <Stack $gap={9}>
                <Group $height={46} $inset={2}>
                  <legend><label htmlFor="num">Elemento puntual núm.</label></legend>
                  <NumInput id="num" defaultValue="3" />
                </Group>
                <Group $height={66} $inset={5}>
                  <legend>Estado</legend>
                  <Radios name="estado" options={["Insertar", "Quitar"]} value="Insertar" />
                </Group>
              </Stack>
              <Group>
                <legend>Tipo</legend>
                <Radios name="tipo" options={["Redondeo", "Rectángulo", "Círculo", "Triángulo"]} value="Redondeo" />
              </Group>
            </Pair>
            <Group $height={46}>
              <legend><label htmlFor="material">Material</label></legend>
              <MaterialRow>
                <MaterialBox>
                  <Swatch />
                  <MaterialSelect id="material">
                    <option>{"1  |  Acero S 235  |  EN 10025-2:2"}</option>
                  </MaterialSelect>
                  <Chevron viewBox="0 0 10 6"><path d="M1 1 5 5 9 1" /></Chevron>
                </MaterialBox>
                <IconButton aria-label="Biblioteca"><Icon name="book" /></IconButton>
                <IconButton aria-label="Nuevo"><Icon name="winNew" /></IconButton>
                <IconButton aria-label="Editar"><Icon name="winHand" /></IconButton>
              </MaterialRow>
            </Group>
            <Pair>
              <Stack $gap={10}>
                <Group $height={70} $inset={2}>
                  <legend>Posición</legend>
                  <NumberField id="posY" label="Y :" value="6.0" unit="[mm]" />
                  <NumberField id="posZ" label="Z :" value="19.0" unit="[mm]" />
                </Group>
                <Group $height={62}>
                  <legend>Referencia</legend>
                  <Radios name="ref" options={["SC actual", "Origen de rejilla"]} value="SC actual" />
                </Group>
              </Stack>
              <Group $inset={2}>
                <legend>Parámetros</legend>
                <Stack $gap={29}>
                  <NumberField id="parR" label="r:" value="10.0" unit="[mm]" />
                  <NumberField id="parB" label="β :" value="0.00" unit="[º]" />
                </Stack>
              </Group>
            </Pair>
          </FormArea>
          <PreviewArea>
            <Preview role="img" aria-label="Redondeo">
              <defs><Hatch id="hatchPreview" /></defs>
              <path d="M11.500 24.500H205L155 31 108 50 68 81 37 121 17 171 11.500 218Z" fill="url(#hatchPreview)" stroke="#a8a8a8" />
              {corners.map(([x, y]) => <Dot key={`${x}-${y}`} x={x} y={y} s={4} c="#18f0f8" />)}
              <Axes x={55} y={180} />
            </Preview>
            <Group $height={70} $inset={2}>
              <legend>Posición del punto de desfase</legend>
              <NumberField id="offY" label="y :" value="0.0" unit="[mm]" />
              <NumberField id="offZ" label="z :" value="0.0" unit="[mm]" />
            </Group>
          </PreviewArea>
        </DialogColumns>
        <DialogFooter>
          <IconButton aria-label="Ayuda"><Icon name="help" /></IconButton>
          <ApplyButton>Aplicar</ApplyButton>
        </DialogFooter>
      </DialogBody>
    </Dialog>
  )
}

/* ---------- table ---------- */

function NodeTable() {
  return (
    <TableFrame>
      <TableScroll>
        <DataTable>
          <colgroup>
            <Col $w={45} /><Col $w={72} /><Col $w={90} /><Col $w={78} /><Col $w={78} /><col />
          </colgroup>
          <thead>
            <tr>
              <Corner rowSpan={3}>Nudo<br />núm.</Corner>
              {["A", "B", "C", "D", "E"].map((c) => <Letter key={c} $on={c === "A"}>{c}</Letter>)}
            </tr>
            <tr>
              <Head rowSpan={2}>Nudo de<br />referencia</Head>
              <Head rowSpan={2}>Sistema de<br />coordenadas</Head>
              <Head colSpan={2}>Coordenadas del nudo</Head>
              <Head rowSpan={2}>Comentario</Head>
            </tr>
            <tr>
              <Head>Y [mm]</Head>
              <Head>Z [mm]</Head>
            </tr>
          </thead>
          <tbody>
            {nodes.map(([y, z], i) => (
              <tr key={i}>
                <RowHead $on={i === 0}>{i + 1}</RowHead>
                <Cell $align="center" $focus={i === 0}>0</Cell>
                <Cell $align="left"><u>C</u>artesiano</Cell>
                <Cell>{y}</Cell>
                <Cell>{z}</Cell>
                <Cell />
              </tr>
            ))}
          </tbody>
        </DataTable>
      </TableScroll>
      <VScroll>
        <ArrowSvg viewBox="0 0 8 6"><path d="M1 5 4 1.500 7 5" /></ArrowSvg>
        <VThumb />
        <ArrowSvg viewBox="0 0 8 6"><path d="M1 1 4 4.500 7 1" /></ArrowSvg>
      </VScroll>
    </TableFrame>
  )
}

export default function App() {
  return (
    <Window>
      <GlobalStyle />
      <TitleBar>
        <Icon name="app" />
        <span>SHAPE-THIN 8.07.03 x32 - [IV-Plástico_A.due*]</span>
        <WindowButtons>
          <PlainButton aria-label="Minimizar"><Cap viewBox="0 0 12 12"><path d="M1 6.500H11" /></Cap></PlainButton>
          <PlainButton aria-label="Maximizar"><Cap viewBox="0 0 12 12"><path d="M1.500 1.500H10.500V10.500H1.500Z" /></Cap></PlainButton>
          <PlainButton aria-label="Cerrar"><Cap viewBox="0 0 12 12"><path d="M1 1 11 11M11 1 1 11" /></Cap></PlainButton>
        </WindowButtons>
      </TitleBar>
      <MenuBar>
        <Grip />
        <Icon name="logo" />
        <MenuList>
          {menus.map(([a, b, c]) => <MenuItem key={b + c}>{a}<u>{b}</u>{c}</MenuItem>)}
        </MenuList>
        <MdiButtons>
          <PlainButton aria-label="Minimizar documento"><Mdi viewBox="0 0 10 10"><path d="M2 8H8" /></Mdi></PlainButton>
          <PlainButton aria-label="Restaurar documento"><Mdi viewBox="0 0 10 10"><path d="M3 3V1H9V6H7M1 4H7V9H1ZM1 4.500H7" /></Mdi></PlainButton>
          <PlainButton aria-label="Cerrar documento"><Mdi viewBox="0 0 10 10"><path d="M1.500 1.500 8.500 8.500M8.500 1.500 1.500 8.500" /></Mdi></PlainButton>
        </MdiButtons>
      </MenuBar>
      <StripRow>
        <ToolStrip items={barFile} />
        <ToolStrip items={barEdit} />
      </StripRow>
      <StripRow>
        <ToolStrip items={barInsert} />
        <ToolStrip items={barZoom} />
        <ToolStrip items={barResults} />
      </StripRow>
      <Work>
        <Navigator>
          <PanelTitle>
            <span>Navegador de proyectos - Datos</span>
            <PlainButton aria-label="Fijar"><Icon name="pin" size={14} /></PlainButton>
            <PlainButton aria-label="Cerrar panel"><Icon name="close" size={14} /></PlainButton>
          </PanelTitle>
          <TreeFrame>
            <TreeList>
              {tree.map(([guides, icon, label, bold]) => (
                <TreeRow key={label} guides={guides} icon={icon} label={label} bold={bold} />
              ))}
            </TreeList>
            <HScroll>
              <ArrowSvg viewBox="0 0 8 8"><path d="M5.500 1 2.500 4 5.500 7" /></ArrowSvg>
              <HThumb />
              <ArrowSvg viewBox="0 0 8 8"><path d="M2.500 1 5.500 4 2.500 7" /></ArrowSvg>
            </HScroll>
          </TreeFrame>
          <ViewTabs>
            <ViewTab $on><Icon name="navData" />Datos</ViewTab>
            <ViewTab><Icon name="navShow" />Mostrar</ViewTab>
            <ViewTab><Icon name="navView" />Vistas</ViewTab>
          </ViewTabs>
        </Navigator>
        <Main>
          <Canvas><Drawing /></Canvas>
          <TablePanel>
            <PanelTitle>
              <span>1.1 Nudos</span>
              <PlainButton aria-label="Fijar"><Icon name="pin" size={14} /></PlainButton>
              <PlainButton aria-label="Cerrar tabla"><Icon name="close" size={14} /></PlainButton>
            </PanelTitle>
            <TableTools><Tools items={barTable} /></TableTools>
            <NodeTable />
            <SheetTabs>
              {sheets.map((s, i) => <SheetTab key={s} $on={i === 0}>{s}</SheetTab>)}
            </SheetTabs>
          </TablePanel>
        </Main>
      </Work>
      <StatusBar>
        <StatusText>Seleccione un nudo nuevo.</StatusText>
        <Modes>{modes.map((m) => <Mode key={m}>{m}</Mode>)}</Modes>
        <Readout $w={154} $right>SC: Global YZ</Readout>
        <Readout $w={74}>Y:  6.0 mm</Readout>
        <Readout $w={80}>Z:  19.0 mm</Readout>
        <SizeGrip viewBox="0 0 10 10"><path d="M8 1V3M8 5V7M8 9V11M4 5V7M4 9V11M0 9V11" /></SizeGrip>
      </StatusBar>
      <PointDialog />
    </Window>
  )
}

/* ---------- styles ---------- */

const ui = `Roboto, "Open Sans", sans-serif`
const treeFont = `"Open Sans", "Noto Sans", sans-serif`
const grid = `"Liberation Sans", Arial, sans-serif`
const bar = "linear-gradient(#ebeff8, #e4e8f1 45%, #d0d5de)"

const GlobalStyle = createGlobalStyle`
  * { box-sizing: border-box; }
  body { margin: 0; background: #d0d4dd; }
  button, input, select { font: inherit; color: inherit; }
  button { padding: 0; }
`
const Window = styled.div`
  position: relative;
  display: flex;
  flex-direction: column;
  height: 100vh;
  overflow: hidden;
  border: 1px solid #a0a0a0;
  background: #d0d4dd;
  font: 12px/16px ${ui};
  color: #000;
`
const PlainButton = styled.button`
  display: flex;
  align-items: center;
  justify-content: center;
  border: 0;
  background: none;
`
const TitleBar = styled.header`
  display: flex;
  align-items: center;
  gap: 5px;
  height: 30px;
  padding-left: 9px;
  background: #fff;
  color: #8a8a8a;
`
const WindowButtons = styled.div`
  display: flex;
  margin-left: auto;
  ${PlainButton} {
    width: 46px;
    height: 28px;
  }
`
const Cap = styled.svg`
  width: 12px;
  height: 12px;
  fill: none;
  stroke: #777;
`
const MenuBar = styled.nav`
  display: flex;
  align-items: center;
  height: 24px;
`
const Grip = styled.span`
  flex: none;
  width: 10px;
  height: 14px;
  background: radial-gradient(circle, #fff 1px, transparent 2px) 3px 0 / 4px 4px repeat-y;
`
const MenuList = styled.div`
  display: flex;
  padding-left: 3px;
`
const MenuItem = styled.button`
  padding: 0 6px 0 7px;
  border: 0;
  background: none;
  color: #4c515c;
  white-space: nowrap;
  u {
    text-underline-offset: 2px;
  }
`
const MdiButtons = styled.div`
  display: flex;
  gap: 6px;
  margin-left: auto;
  padding-right: 4px;
`
const Mdi = styled.svg`
  width: 10px;
  height: 10px;
  fill: none;
  stroke: #5a606b;
  stroke-width: 1.2;
`
const StripRow = styled.div`
  display: flex;
  gap: 2px;
  height: 26px;
`
const Strip = styled.div`
  display: flex;
  align-items: center;
  height: 26px;
  padding-right: 2px;
  border-bottom: 1px solid #adb2bc;
  border-radius: 3px;
  background: ${bar};
`
const ToolButton = styled.button`
  display: flex;
  align-items: center;
  justify-content: center;
  flex: none;
  width: 22px;
  height: 22px;
  border: 1px solid transparent;
  background: none;
  ${(p) => p.$pressed && css`
    border-color: #b9a585;
    background: radial-gradient(#ffe9a6, #fbb765);
  `}
`
const Separator = styled.span`
  flex: none;
  width: 2px;
  height: 14px;
  margin: 0 3px;
  border-left: 1px solid #b4bac6;
  border-right: 1px solid #fff;
`
const DropArrow = styled.button`
  flex: none;
  width: 12px;
  height: 22px;
  border: 0;
  background: none;
  &::before {
    content: "";
    display: block;
    margin: auto;
    width: 0;
    border: 3px solid transparent;
    border-top-color: #6b7079;
    border-bottom: 0;
  }
`
const Combo = styled.select`
  appearance: none;
  flex: none;
  width: 154px;
  height: 19px;
  margin: 0 2px;
  border: 1px solid #9da3ae;
  border-radius: 0;
  outline: 1px solid #fff;
  outline-offset: -2px;
  background: linear-gradient(#6b7079, #6b7079) 143px 7px / 5px 1px no-repeat,
    linear-gradient(#6b7079, #6b7079) 144px 8px / 3px 1px no-repeat,
    linear-gradient(#6b7079, #6b7079) 145px 9px / 1px 1px no-repeat, #efefef;
`
const Work = styled.div`
  display: flex;
  flex: 1;
  gap: 5px;
  min-height: 0;
  padding-top: 1px;
`
const Navigator = styled.aside`
  display: flex;
  flex-direction: column;
  flex: none;
  width: 285px;
  padding-left: 1px;
`
const PanelTitle = styled.div`
  display: flex;
  align-items: center;
  flex: none;
  height: 19px;
  padding: 0 3px;
  background: #b9c0ca;
  color: #3f454f;
  span {
    flex: 1;
  }
  ${PlainButton} {
    width: 16px;
  }
`
const TreeFrame = styled.div`
  display: flex;
  flex: 1;
  flex-direction: column;
  min-height: 0;
  margin: 3px 1px 0 1px;
  border: 1px solid #9ba1ad;
  background: #fcfbf3;
`
const TreeList = styled.div`
  flex: 1;
  overflow: hidden;
  padding-left: 3px;
  font-family: ${treeFont};
  font-size: 11px;
`
const Row = styled.div`
  display: flex;
  align-items: center;
  height: 18px;
  white-space: pre;
`
const Guide = styled.span`
  position: relative;
  display: flex;
  align-items: center;
  justify-content: center;
  flex: none;
  width: 19px;
  height: 18px;
  &::before,
  &::after {
    content: "";
    position: absolute;
    left: 9px;
  }
  &::before {
    display: ${(p) => (p.$kind === " " ? "none" : "block")};
    top: 0;
    height: ${(p) => ("Lep".includes(p.$kind) ? 9 : 18)}px;
    border-left: 1px dotted #8a8a8a;
  }
  &::after {
    display: ${(p) => (" I".includes(p.$kind) ? "none" : "block")};
    top: 9px;
    width: 10px;
    border-top: 1px dotted #8a8a8a;
  }
`
const Toggle = styled.button`
  position: relative;
  z-index: 1;
  display: flex;
  width: 9px;
  height: 9px;
  border: 1px solid #8f98a8;
  background: #fff;
`
const MiniSvg = styled.svg`
  width: 7px;
  height: 7px;
`
const RowIcon = styled.span`
  flex: none;
  width: 21px;
  padding-left: 1px;
`
const RowLabel = styled.span`
  font-weight: ${(p) => (p.$bold ? 700 : 400)};
`
const ArrowSvg = styled.svg`
  width: 9px;
  height: 9px;
  fill: none;
  stroke: #505050;
  stroke-width: 1.6;
`
const HScroll = styled.div`
  display: flex;
  align-items: center;
  gap: 5px;
  flex: none;
  height: 16px;
  margin-bottom: 1px;
  padding: 0 4px;
  background: #f0f0f0;
`
const HThumb = styled.div`
  flex: 1;
  height: 16px;
  margin-right: 6px;
  background: #cdcdcd;
`
const ViewTabs = styled.div`
  display: flex;
  gap: 5px;
  height: 24px;
  padding-left: 2px;
`
const ViewTab = styled.button`
  display: flex;
  align-items: center;
  gap: 2px;
  height: 22px;
  padding: 0 4px 0 2px;
  border: 0;
  border-radius: 0 0 4px 4px;
  background: ${(p) => (p.$on ? "#f4f6f8" : "none")};
  color: #4c515c;
`
const Main = styled.main`
  display: flex;
  flex: 1;
  flex-direction: column;
  gap: 6px;
  min-width: 0;
`
const Canvas = styled.section`
  flex: 1;
  min-height: 0;
  border-top: 1px solid #6c6c6c;
  border-left: 1px solid #6c6c6c;
  background: #fff;
`
const DrawingSvg = styled.svg`
  display: block;
  width: 100%;
  height: 100%;
`
const AxisText = styled.text`
  font: 10px ${grid};
`
const CoordText = styled.text`
  font: bold 11px "Liberation Mono", monospace;
  fill: #999;
  white-space: pre;
`
const TablePanel = styled.section`
  flex: none;
  display: flex;
  flex-direction: column;
  background: #f0f0f0;
  font-family: ${grid};
  font-size: 11px;
  ${PanelTitle} {
    font-family: ${ui};
    font-size: 12px;
  }
`
const TableTools = styled.div`
  display: flex;
  align-items: center;
  height: 25px;
  padding-left: 8px;
  background: ${bar};
`
const TableFrame = styled.div`
  display: flex;
  height: 162px;
  padding: 2px 1px 0;
  border: 1px solid #6a6a6a;
  border-width: 1px 1px 2px;
`
const TableScroll = styled.div`
  flex: 1;
`
const DataTable = styled.table`
  width: 100%;
  table-layout: fixed;
  border-collapse: collapse;
  line-height: 15px;
`
const Col = styled.col`
  width: ${(p) => p.$w}px;
`
const Head = styled.th`
  height: 16px;
  padding: 0 0 1px;
  border: 1px solid #a0a0a0;
  border-width: 0 1px;
  background: #f0f0f0;
  font-weight: 400;
  vertical-align: bottom;
`
const Letter = styled(Head)`
  height: 15px;
  padding: 0;
  line-height: 14px;
  border: 1px solid #707070;
  background: ${(p) => (p.$on ? "#3399ff" : "#e1e1e1")};
  color: ${(p) => (p.$on ? "#fff" : "#000")};
`
const Corner = styled(Head)`
  padding-top: 10px;
  border: 1px solid #707070;
  background: #e1e1e1;
  vertical-align: middle;
  line-height: 13px;
`
const RowHead = styled(Head)`
  padding: 0;
  border: 1px solid #707070;
  background: ${(p) => (p.$on ? "#3399ff" : "#e1e1e1")};
  color: ${(p) => (p.$on ? "#fff" : "#000")};
`
const Cell = styled.td`
  height: 16px;
  padding: 0 4px 0 3px;
  border: 1px solid #a0a0a0;
  background: #fff;
  text-align: ${(p) => p.$align || "right"};
  outline: ${(p) => (p.$focus ? "1px dotted #000" : "none")};
  outline-offset: -1px;
`
const VScroll = styled.div`
  display: flex;
  flex-direction: column;
  align-items: center;
  width: 15px;
  height: 144px;
  margin: 0 2px;
  padding: 6px 0 4px;
  background: #f0f0f0;
  ${ArrowSvg} {
    flex: none;
  }
`
const VThumb = styled.div`
  flex: none;
  width: 15px;
  height: 55px;
  margin: 2px 0 auto;
  background: #cdcdcd;
`
const SheetTabs = styled.div`
  display: flex;
  height: 37px;
`
const SheetTab = styled.button`
  height: 18px;
  padding: 0 4px 0 3px;
  border: 1px solid #707070;
  border-width: 0 1px 1px 0;
  border-radius: 0 0 4px 4px;
  background: ${(p) => (p.$on ? "#f0f0f0" : "#e1e1e1")};
`
const StatusBar = styled.footer`
  display: flex;
  align-items: center;
  height: 21px;
  border-top: 1px solid #a9aeb8;
  background: linear-gradient(#cfd3db, #b9bec7 40%, #a3a9b2 50%, #b4bac4);
  color: #2a2d33;
  font-family: ${grid};
  font-size: 11px;
`
const StatusText = styled.span`
  flex: 1;
  padding-left: 4px;
`
const Modes = styled.div`
  display: flex;
  gap: 2px;
`
const Mode = styled.button`
  height: 18px;
  padding: 0 2px 0 1px;
  border: 1px solid;
  border-color: #222 #fff #fff #222;
  background: none;
  font-family: ${ui};
  font-size: 12px;
  line-height: 16px;
`
const Readout = styled.span`
  width: ${(p) => p.$w}px;
  padding-left: 2px;
  border-left: 1px solid #8a8f99;
  text-align: ${(p) => (p.$right ? "right" : "left")};
  white-space: pre;
`
const SizeGrip = styled.svg`
  align-self: flex-end;
  width: 10px;
  height: 10px;
  stroke: #7a808a;
  stroke-width: 2;
`

/* dialog floats over the drawing */
const Dialog = styled.div`
  position: absolute;
  left: 1087px;
  top: 312px;
  width: 535px;
  border: 1px solid #2bbfce;
  background: #f0f0f0;
  box-shadow: 0 4px 14px rgba(0, 0, 0, 0.35);
  font-size: 11px;
`
const DialogTitle = styled.div`
  display: flex;
  align-items: center;
  justify-content: space-between;
  height: 25px;
  padding: 0 9px 0 3px;
  background: #2bbfce;
  font-size: 12px;
`
const Cross = styled.svg`
  width: 12px;
  height: 12px;
  stroke: #000;
`
const DialogBody = styled.div`
  padding: 9px 8px 7px;
`
const DialogColumns = styled.div`
  display: flex;
  gap: 8px;
  padding-bottom: 7px;
  border-bottom: 1px solid #a0a0a0;
`
const FormArea = styled.div`
  display: flex;
  flex-direction: column;
  gap: 9px;
  width: 292px;
`
const Pair = styled.div`
  display: grid;
  grid-template-columns: 1fr 1fr;
  gap: 8px;
`
const Stack = styled.div`
  display: flex;
  flex-direction: column;
  gap: ${(p) => p.$gap}px;
`
const Group = styled.fieldset`
  min-width: 0;
  min-height: ${(p) => p.$height || 0}px;
  margin: 0;
  padding: ${(p) => p.$inset || 4}px 3px 0;
  border: 0;
  background: linear-gradient(#a9a4ea, #a9a4ea) right bottom / 100% 1px no-repeat,
    linear-gradient(#a9a4ea, #a9a4ea) right bottom / 1px calc(100% - 10px) no-repeat,
    linear-gradient(#f7f7f7, #f7f7f7) 0 16px no-repeat;
  legend {
    float: left;
    width: calc(100% + 6px);
    height: 16px;
    margin: ${(p) => -(p.$inset || 4)}px -3px ${(p) => p.$inset || 4}px;
    padding: 0 2px;
    background: #d9e4fe;
    clip-path: polygon(0 0, calc(100% - 10px) 0, 100% 10px, 100% 100%, 0 100%);
    color: #10107c;
  }
  legend + * {
    clear: both;
  }
`
const NumInput = styled.input`
  display: block;
  width: 45px;
  height: 21px;
  padding: 0 5px;
  border: 1px solid #0078d7;
  background: #fff;
`
const RadioLabel = styled.label`
  display: flex;
  align-items: center;
  gap: 3px;
  height: 20px;
`
const Radio = styled.input.attrs({ type: "radio" })`
  appearance: none;
  width: 13px;
  height: 13px;
  margin: 0;
  border: 1px solid #333;
  border-radius: 50%;
  background: #fff;
  &:checked {
    background: radial-gradient(circle, #333 3px, #fff 4px);
  }
`
const MaterialRow = styled.div`
  display: flex;
  align-items: center;
  gap: 5px;
`
const MaterialBox = styled.div`
  display: flex;
  align-items: center;
  flex: 1;
  min-width: 0;
  height: 22px;
  padding: 0 4px 0 3px;
  border: 1px solid #7a7a7a;
  background: #fff;
`
const Swatch = styled.span`
  flex: none;
  width: 13px;
  height: 13px;
  border: 1px solid #333;
  background: #6464ff;
`
const MaterialSelect = styled.select`
  appearance: none;
  flex: 1;
  min-width: 0;
  padding: 0 0 0 7px;
  border: 0;
  background: none;
  white-space: pre;
`
const Chevron = styled.svg`
  flex: none;
  width: 10px;
  height: 6px;
  fill: none;
  stroke: #444;
`
const IconButton = styled.button`
  display: flex;
  align-items: center;
  justify-content: center;
  flex: none;
  width: 25px;
  height: 22px;
  border: 1px solid #adadad;
  background: #e1e1e1;
`
const Field = styled.div`
  display: grid;
  grid-template-columns: 17px 80px auto;
  align-items: center;
  column-gap: 4px;
  height: 23px;
`
const Spinner = styled.div`
  display: flex;
  height: 20px;
  width: 80px;
  border: 1px solid #7a7a7a;
  background: #fff;
`
const SpinInput = styled.input`
  flex: 1;
  min-width: 0;
  padding: 0 5px;
  border: 0;
  background: none;
  text-align: right;
`
const SpinButtons = styled.div`
  display: flex;
  flex-direction: column;
  width: 16px;
`
const SpinButton = styled.button`
  display: flex;
  align-items: center;
  justify-content: center;
  flex: 1;
  border: 1px solid #adadad;
  background: #f0f0f0;
`
const Tri = styled.svg`
  width: 6px;
  height: 4px;
`
const PreviewArea = styled.div`
  display: flex;
  flex: 1;
  flex-direction: column;
  gap: 10px;
`
const Preview = styled.svg`
  display: block;
  width: 100%;
  flex: 1;
  min-height: 0;
  border-top: 1px solid #a0a0a0;
  border-left: 1px solid #a0a0a0;
  background: #fff;
`
const DialogFooter = styled.div`
  display: flex;
  align-items: center;
  justify-content: space-between;
  padding: 11px 1px 1px;
`
const ApplyButton = styled.button`
  width: 73px;
  height: 22px;
  border: 2px solid #0078d7;
  background: #e1e1e1;
`
